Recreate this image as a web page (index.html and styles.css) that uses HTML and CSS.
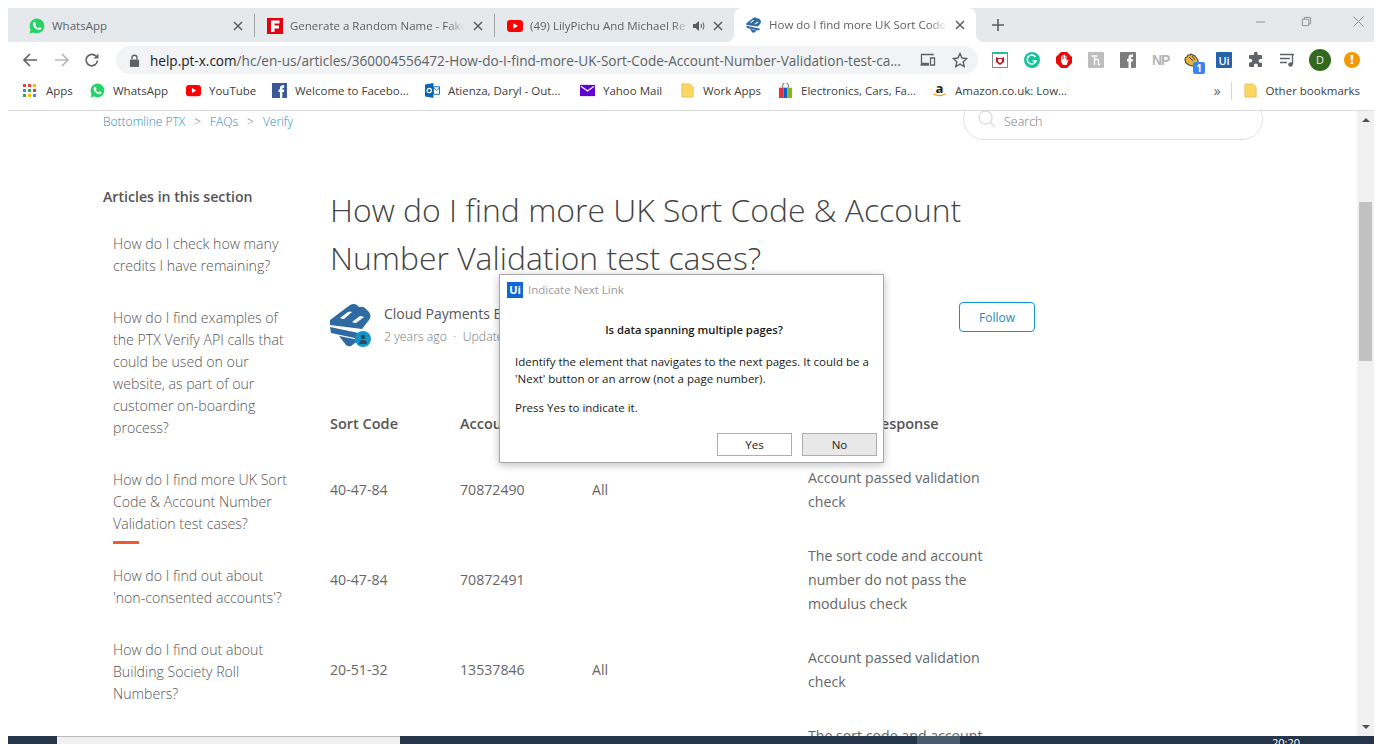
FILE: index.html
```html
<!DOCTYPE html>
<html lang="en">
<head>
    <meta charset="UTF-8">
    <title>How do I find more UK Sort Code &amp; Account Number Validation test cases?</title>
    <link rel="stylesheet" href="styles.css">
</head>
<body>
<svg class="defs" width="0" height="0">
    <symbol id="i-whatsapp" viewBox="0 0 16 16">
        <path fill="#25d366" d="M8 .5a7.4 7.4 0 0 0-6.4 11.1L.6 15.5l4-1A7.4 7.4 0 1 0 8 .5z"/>
        <path fill="#fff" d="M5.6 3.9c-.3 0-.7.1-1 .5-.4.5-.9 1.200-.6 2.500.4 1.500 2.100 3.700 4.200 4.600 1.500.6 2.400.6 3.100.2.600-.3 1-1 1-1.500 0-.3-.1-.4-.3-.5l-1.500-.7c-.2-.1-.4-.1-.5.1l-.6.800c-.1.100-.3.200-.5.100-.9-.4-2-1.400-2.500-2.300-.1-.2 0-.3.100-.5l.4-.5c.1-.2.1-.3 0-.5l-.6-1.600c-.1-.2-.3-.4-.7-.3z"/>
    </symbol>
    <symbol id="i-youtube" viewBox="0 0 16 16">
        <rect x="0" y="2" width="16" height="12" rx="3.200" fill="#f00"/>
        <path fill="#fff" d="M6.300 5.300v5.400L11 8z"/>
    </symbol>
    <symbol id="i-bottomline" viewBox="0 0 42 44">
        <path fill="#2f6aa3" d="M0 17 20 2q4-2 7 0l2 2q3-1 6 1l4 4q3 4 0 8l-7 9-32-4z"/>
        <path fill="#2f6aa3" d="M0 24l38 8-4 5L1 30z"/>
        <path fill="#2f6aa3" d="M9 33l20 4-8 6q-3 1-5-1z"/>
        <path fill="#fff" d="M10 15l8-6q2-1 4 0l-8 7q-2 0-4-1zM22 19l8-6q2 0 4 1l-8 6q-2 0-4-1z"/>
    </symbol>
    <symbol id="i-folder" viewBox="0 0 14 16">
        <path fill="#fdd663" stroke="#e3b94f" stroke-width=".8" d="M1 1h8l4 3v11H1z"/>
    </symbol>
    <symbol id="i-close" viewBox="0 0 10 10">
        <path fill="none" stroke="#5a5d60" stroke-width="1.500" d="M1 1l8 8M9 1l-8 8"/>
    </symbol>
</svg>

<div class="window">
    <div class="tabstrip">
        <div class="tab tab-first">
            <svg class="fav"><use href="#i-whatsapp"/></svg>
            <span class="tab-title">WhatsApp</span>
            <svg class="tab-x"><use href="#i-close"/></svg>
        </div>
        <div class="tab">
            <svg class="fav" viewBox="0 0 16 16"><rect width="16" height="16" fill="#e3000f"/><path fill="#fff" d="M4 2.500h8.500v3H7.500v2h4.500v3H7.500v3.500H4z"/></svg>
            <span class="tab-title">Generate a Random Name - Fake</span>
            <svg class="tab-x"><use href="#i-close"/></svg>
        </div>
        <div class="tab tab-noline">
            <svg class="fav"><use href="#i-youtube"/></svg>
            <span class="tab-title">(49) LilyPichu And Michael Re</span>
            <svg class="tab-sound" viewBox="0 0 12 12"><path fill="#5a5d60" d="M0 4h2.500L6 1v10L2.500 8H0z"/><path fill="none" stroke="#5a5d60" d="M8 4q1 2 0 4M10 2.500q2 3.500 0 7"/></svg>
            <svg class="tab-x"><use href="#i-close"/></svg>
        </div>
        <div class="tab tab-active">
            <svg class="fav"><use href="#i-bottomline"/></svg>
            <span class="tab-title">How do I find more UK Sort Code</span>
            <svg class="tab-x"><use href="#i-close"/></svg>
        </div>
        <svg class="new-tab" viewBox="0 0 12 12"><path fill="none" stroke="#5a5d60" stroke-width="1.600" d="M6 0v12M0 6h12"/></svg>
        <div class="win-btns">
            <svg viewBox="0 0 12 12"><path stroke="#8a8c8e" d="M1 6.500h10"/></svg>
            <svg viewBox="0 0 12 12"><path fill="none" stroke="#8a8c8e" d="M1.500 3.500h7v7h-7zM3.500 3.500v-2h7v7h-2"/></svg>
            <svg viewBox="0 0 12 12"><path stroke="#8a8c8e" d="M.5.500l11 11M11.500.500l-11 11"/></svg>
        </div>
    </div>

    <div class="toolbar">
        <svg class="nav-btn" viewBox="0 0 16 16"><path fill="none" stroke="#5f6368" stroke-width="1.700" d="M15 8H2M8 2 2 8l6 6"/></svg>
        <svg class="nav-btn" viewBox="0 0 16 16"><path fill="none" stroke="#b4b7ba" stroke-width="1.700" d="M1 8h13M8 2l6 6-6 6"/></svg>
        <svg class="nav-btn" viewBox="0 0 16 16"><path fill="none" stroke="#5f6368" stroke-width="1.700" d="M13.500 8.500a5.700 5.700 0 1 1-1.500-4.300"/><path fill="#5f6368" d="M14.500 1.500v5h-5z"/></svg>
        <div class="omnibox">
            <svg class="lock" viewBox="0 0 12 14"><path fill="#5f6368" d="M1 6h10v8H1z"/><path fill="none" stroke="#5f6368" stroke-width="1.500" d="M3.300 6V4a2.700 2.700 0 0 1 5.400 0v2"/></svg>
            <span class="url">help.pt-x.com<span class="url-path">/hc/en-us/articles/360004556472-How-do-I-find-more-UK-Sort-Code-Account-Number-Validation-test-ca...</span></span>
            <svg class="omni-ico omni-cast" viewBox="0 0 16 14"><path fill="none" stroke="#5f6368" stroke-width="1.300" d="M13 2.500V1.500H1.500v9H9M.5 12H9"/><path fill="none" stroke="#5f6368" stroke-width="1.300" d="M10.500 5h4v7h-4z"/></svg>
            <svg class="omni-ico" viewBox="0 0 16 16"><path fill="none" stroke="#5f6368" stroke-width="1.400" d="M8 1.500l2 4.500 4.800.5-3.600 3.200 1 4.800L8 12.100l-4.200 2.400 1-4.800L1.200 6.500 6 6z"/></svg>
        </div>
        <div class="extensions">
            <svg viewBox="0 0 16 16"><rect x=".5" y="1.500" width="15" height="14" fill="#fff" stroke="#888"/><path fill="#27c28a" d="M0 0h16v2H0z"/><path fill="#c0141b" d="M4 5l2 1h4l2-1v5l-4 3-4-3z"/><path fill="#fff" d="M6 7h4v2.500L8 11 6 9.500z"/></svg>
            <svg viewBox="0 0 16 16"><circle cx="8" cy="8" r="8" fill="#15c39a"/><path fill="none" stroke="#fff" stroke-width="1.600" d="M11.500 5A4.500 4.500 0 1 0 12 9H8.700"/></svg>
            <svg viewBox="0 0 16 16"><path fill="#e60b0b" d="M5 0h6l5 5v6l-5 5H5l-5-5V5z"/><path fill="#fff" d="M5 8V4.500h1V7h.500V3h1v4H8V2.800h1V7h.500V3.800h1V9l1.200-1.500.800.500L10.500 13H7L5 10z"/></svg>
            <svg viewBox="0 0 16 16"><rect width="16" height="16" rx="1" fill="#bdbdbd"/><path fill="none" stroke="#fff" stroke-width="1.300" d="M3.500 4h6M6.500 4v9M6.500 8q4-2 4 1v3.500l1.500.5"/></svg>
            <svg viewBox="0 0 16 16"><rect width="16" height="16" rx="1" fill="#7d7d7d"/><path fill="#fff" d="M8.500 16V9.500H7V7h1.500V5.300C8.500 3.500 9.700 2.500 11.200 2.500H13V5h-1.200c-.6 0-.8.300-.8.800V7h2l-.3 2.500H11V16z"/></svg>
            <span class="ext-np">NP</span>
            <div class="ext-hand">
                <svg viewBox="0 0 16 16"><path fill="#e8b73a" stroke="#4a4234" stroke-width="1.100" stroke-linejoin="round" d="M1 7q0-3 2-3l1-2 2 0 1-1 2 1 2 1 3 4v3l-2 2-4 1-3-1-3-2z"/><path fill="none" stroke="#4a4234" d="M5 4l4 4M8 3l3 4"/></svg>
                <span class="ext-badge">1</span>
            </div>
            <svg viewBox="0 0 16 16"><rect width="16" height="16" rx="1" fill="#2363a8"/><text x="8" y="12.500" class="ui-mark">Ui</text></svg>
            <svg viewBox="0 0 16 16"><path fill="#5f6368" d="M6 1.500a1.800 1.800 0 0 1 3.600 0V3H13a1 1 0 0 1 1 1v3h-1.500a1.900 1.900 0 0 0 0 3.800H14V14a1 1 0 0 1-1 1H9.800v-1.500a1.900 1.900 0 0 0-3.800 0V15H2a1 1 0 0 1-1-1v-3.500h1.300a1.900 1.900 0 0 0 0-3.800H1V4a1 1 0 0 1 1-1h4z"/></svg>
            <svg viewBox="0 0 16 16"><path fill="none" stroke="#5f6368" stroke-width="1.400" d="M0 2.500h14M0 6.500h10M0 10.500h7"/><path fill="none" stroke="#5f6368" stroke-width="1.400" d="M12.500 3v9"/><circle cx="10.500" cy="12.500" r="2.300" fill="#5f6368"/></svg>
            <span class="avatar">D</span>
            <span class="alert">!</span>
        </div>
    </div>

    <div class="bookmarks">
        <div class="bm">
            <svg class="bm-ico" viewBox="0 0 13 13"><g>
                <rect x="0" width="3" height="3" fill="#ea4335"/><rect x="5" width="3" height="3" fill="#ea4335"/><rect x="10" width="3" height="3" fill="#fbbc04"/>
                <rect x="0" y="5" width="3" height="3" fill="#4285f4"/><rect x="5" y="5" width="3" height="3" fill="#34a853"/><rect x="10" y="5" width="3" height="3" fill="#ea4335"/>
                <rect x="0" y="10" width="3" height="3" fill="#34a853"/><rect x="5" y="10" width="3" height="3" fill="#fbbc04"/><rect x="10" y="10" width="3" height="3" fill="#4285f4"/>
            </g></svg>
            <span>Apps</span>
        </div>
        <div class="bm"><svg class="bm-ico"><use href="#i-whatsapp"/></svg><span>WhatsApp</span></div>
        <div class="bm"><svg class="bm-ico"><use href="#i-youtube"/></svg><span>YouTube</span></div>
        <div class="bm">
            <svg class="bm-ico" viewBox="0 0 16 16"><rect width="16" height="16" fill="#3b5998"/><path fill="#fff" d="M8.500 16V9.500H7V7h1.500V5.300C8.500 3.500 9.700 2.500 11.200 2.500H13V5h-1.200c-.6 0-.8.300-.8.800V7h2l-.3 2.500H11V16z"/></svg>
            <span>Welcome to Facebo...</span>
        </div>
        <div class="bm">
            <svg class="bm-ico" viewBox="0 0 16 16"><path fill="#0a64b4" d="M0 1.500 9 0v16L0 14.500z"/><circle cx="4.500" cy="8" r="2.300" fill="none" stroke="#fff" stroke-width="1.300"/><path fill="#fff" stroke="#0a64b4" d="M9 4h6.500v8H9z"/><path fill="none" stroke="#0a64b4" d="M9.500 5l3 3 3-3"/></svg>
            <span>Atienza, Daryl - Out...</span>
        </div>
        <div class="bm">
            <svg class="bm-ico" viewBox="0 0 16 16"><rect y="2" width="16" height="12" fill="#5f01d1"/><path fill="none" stroke="#fff" stroke-width="1.300" d="M1 3.500l7 5 7-5"/></svg>
            <span>Yahoo Mail</span>
        </div>
        <div class="bm"><svg class="bm-ico"><use href="#i-folder"/></svg><span>Work Apps</span></div>
        <div class="bm">
            <svg class="bm-ico" viewBox="0 0 16 16"><path fill="none" stroke="#555" d="M5 5V2.500a3 3 0 0 1 6 0V5"/><path fill="#e53238" d="M1 5h5v11H1z"/><path fill="#0064d2" d="M6 5h4v11H6z"/><path fill="#86b817" d="M10 5h5v11h-5z"/></svg>
            <span>Electronics, Cars, Fa...</span>
        </div>
        <div class="bm">
            <svg class="bm-ico" viewBox="0 0 16 16"><text x="8" y="10.500" class="amz-mark">a</text><path fill="none" stroke="#f90" stroke-width="1.300" d="M1.500 11.500q6.500 4 13 0"/></svg>
            <span>Amazon.co.uk: Low...</span>
        </div>
        <div class="bm-end">
            <span class="bm-more">»</span>
            <i class="bm-sep"></i>
            <svg class="bm-ico"><use href="#i-folder"/></svg>
            <span>Other bookmarks</span>
        </div>
    </div>

    <div class="viewport">
        <div class="page">
            <header class="topbar">
                <div class="crumbs"><a>Bottomline PTX</a><b>&gt;</b><a>FAQs</a><b>&gt;</b><a>Verify</a></div>
                <div class="search">
                    <svg viewBox="0 0 18 18"><circle cx="7.500" cy="7.500" r="6.500" fill="none" stroke="#dcdcdc" stroke-width="1.300"/><path stroke="#dcdcdc" stroke-width="1.500" d="M12 12l5 5"/></svg>
                    <span>Search</span>
                </div>
            </header>

            <div class="columns">
                <aside class="sidebar">
                    <h3>Articles in this section</h3>
                    <ul>
                        <li>How do I check how many credits I have remaining?</li>
                        <li>How do I find examples of the PTX Verify API calls that could be used on our website, as part of our customer on-boarding process?</li>
                        <li class="current">How do I find more UK Sort Code &amp; Account Number Validation test cases?</li>
                        <li>How do I find out about 'non-consented accounts'?</li>
                        <li>How do I find out about Building Society Roll Numbers?</li>
                    </ul>
                </aside>

                <article class="article">
                    <h1>How do I find more UK Sort Code &amp; Account Number Validation test cases?</h1>
                    <div class="author">
                        <div class="author-pic">
                            <svg><use href="#i-bottomline"/></svg>
                            <span class="author-badge"><svg viewBox="0 0 10 10"><circle cx="5" cy="3" r="2.200" fill="#2b4a5e"/><path fill="#2b4a5e" d="M1 10q0-4 4-4t4 4z"/></svg></span>
                        </div>
                        <div class="author-info">
                            <div class="author-name">Cloud Payments Bottomline</div>
                            <div class="author-meta">2 years ago &nbsp;·&nbsp; Updated</div>
                        </div>
                        <button class="follow">Follow</button>
                    </div>
                    <table class="cases">
                        <thead>
                            <tr><th>Sort Code</th><th>Account Number</th><th>Applies To</th><th>Example Response</th></tr>
                        </thead>
                        <tbody>
                            <tr><td>40-47-84</td><td>70872490</td><td>All</td><td>Account passed validation check</td></tr>
                            <tr><td>40-47-84</td><td>70872491</td><td></td><td>The sort code and account number do not pass the modulus check</td></tr>
                            <tr><td>20-51-32</td><td>13537846</td><td>All</td><td>Account passed validation check</td></tr>
                            <tr><td>20-51-32</td><td>13537847</td><td></td><td>The sort code and account number do not pass the modulus check</td></tr>
                        </tbody>
                    </table>
                </article>
            </div>
        </div>

        <div class="scrollbar">
            <i class="arrow-up"></i>
            <i class="thumb"></i>
            <i class="arrow-down"></i>
        </div>

        <div class="dialog">
            <div class="dialog-title"><span class="ui-logo">Ui</span><span>Indicate Next Link</span></div>
            <div class="dialog-body">
                <p class="dialog-head">Is data spanning multiple pages?</p>
                <p>Identify the element that navigates to the next pages. It could be a 'Next' button or an arrow (not a page number).</p>
                <p>Press Yes to indicate it.</p>
            </div>
            <div class="dialog-btns">
                <button>Yes</button>
                <button class="btn-no">No</button>
            </div>
        </div>
    </div>

    <div class="taskbar">
        <i class="task-search"></i>
        <i class="task-active"></i>
        <span class="task-clock">20:20</span>
    </div>
</div>
</body>
</html>
```

FILE: styles.css
```css
*{
    box-sizing: border-box;
    margin: 0;
    padding: 0;
}
html, body{
    height: 100%;
    overflow: hidden;
    background: #fff;
}
body{
    font-family: "Open Sans", "Noto Sans", sans-serif;
    padding: 8px 8px 0;
}
.defs{
    display: block;
    height: 0;
}
.window{
    display: flex;
    flex-direction: column;
    height: 736px;
    position: relative;
}

/* tabs */
.tabstrip{
    display: flex;
    height: 34px;
    background: #e6e9ec;
    flex: none;
}
.tab{
    display: flex;
    align-items: center;
    width: 240px;
    padding: 0 11px 0 12px;
    font-size: 11.5px;
    color: #5f6265;
    border-right: 1px solid #9fa2a5;
    margin: 6px 0 5px;
}
.tab-first{
    width: 247px;
    padding: 0 11px 0 21px;
}
.tab-noline{
    width: 239px;
    border-right: 0;
}
.tab-active{
    width: 242px;
    background: #fff;
    border: 0;
    margin: 0;
    padding-bottom: 1px;
    border-radius: 8px 8px 0 0;
    position: relative;
}
.tab-active::before, .tab-active::after{
    content: "";
    position: absolute;
    bottom: 0;
    width: 8px;
    height: 8px;
    background: radial-gradient(circle at 0 0, transparent 8px, #fff 8.5px);
}
.tab-active::before{
    left: -8px;
}
.tab-active::after{
    right: -8px;
    background: radial-gradient(circle at 100% 0, transparent 8px, #fff 8.5px);
}
.fav{
    width: 16px;
    height: 16px;
    flex: none;
    margin-right: 7px;
}
.tab-title{
    flex: 1;
    white-space: nowrap;
    overflow: hidden;
    -webkit-mask-image: linear-gradient(90deg, #000 90%, transparent);
    mask-image: linear-gradient(90deg, #000 90%, transparent);
}
.tab-first .tab-title{
    -webkit-mask-image: none;
    mask-image: none;
}
.tab-x{
    width: 10px;
    height: 10px;
    flex: none;
    margin-left: 8px;
}
.tab-sound{
    width: 12px;
    height: 12px;
    flex: none;
    margin-left: 4px;
}
.new-tab{
    width: 12px;
    height: 12px;
    margin: 11px 0 0 16px;
    flex: none;
}
.win-btns{
    display: flex;
    gap: 41px;
    margin-left: auto;
    padding: 8px 10px 0 0;
}
.win-btns svg{
    width: 11px;
    height: 11px;
}
.win-btns svg:first-child{
    margin-right: -6px;
}

/* address bar */
.toolbar{
    display: flex;
    align-items: center;
    height: 36px;
    flex: none;
    padding-left: 14px;
    background: #fff;
}
.nav-btn{
    width: 16px;
    height: 16px;
    flex: none;
    margin-right: 16px;
}
.nav-btn:nth-child(3){
    margin: 0 16px 0 -2px;
}
.omnibox{
    display: flex;
    align-items: center;
    width: 862px;
    height: 28px;
    flex: none;
    background: #f1f3f4;
    border-radius: 14px;
    padding: 0 10px 0 13px;
}
.lock{
    width: 11px;
    height: 13px;
    flex: none;
    margin-right: 10px;
}
.url{
    flex: 1;
    font-size: 13.57px;
    color: #202124;
    white-space: nowrap;
    overflow: hidden;
}
.url-path{
    color: #5f6368;
}
.omni-ico{
    width: 16px;
    height: 16px;
    flex: none;
}
.omni-cast{
    margin-right: 16px;
}
.extensions{
    display: flex;
    align-items: center;
    gap: 16px;
    margin-left: 14px;
}
.extensions > svg, .ext-np, .ext-hand{
    width: 16px;
    height: 16px;
    flex: none;
}
.ext-np{
    font-family: "Liberation Sans Narrow", "Liberation Sans", sans-serif;
    font-size: 14px;
    font-weight: 700;
    line-height: 16px;
    color: #b5b5b5;
    white-space: nowrap;
    letter-spacing: -1px;
}
.ext-hand{
    position: relative;
}
.ext-hand svg{
    width: 16px;
    height: 16px;
}
.ext-badge{
    position: absolute;
    right: -5px;
    bottom: -6px;
    width: 12px;
    height: 12px;
    background: #3a84ee;
    border-radius: 2px;
    color: #fff;
    font-size: 10px;
    font-weight: 700;
    line-height: 12px;
    text-align: center;
}
.ui-mark{
    font-size: 11px;
    font-weight: 600;
    fill: #fff;
    text-anchor: middle;
}
.avatar{
    width: 22px;
    height: 22px;
    border-radius: 50%;
    background: #33691e;
    color: #e8eee2;
    font-size: 11px;
    line-height: 22px;
    text-align: center;
    margin: 0 -3px;
    flex: none;
}
.alert{
    width: 16px;
    height: 16px;
    border-radius: 50%;
    background: #f29900;
    color: #fff;
    font-size: 12px;
    font-weight: 800;
    line-height: 16px;
    text-align: center;
    flex: none;
}

/* bookmarks */
.bookmarks{
    display: grid;
    grid-template-columns: 67px 96px 86px 153px 155px 100px 98px 154px 1fr auto;
    align-items: center;
    height: 33px;
    flex: none;
    padding: 0 14px 7px 15px;
    font-size: 11.5px;
    color: #3c4043;
    background: #fff;
    border-bottom: 1px solid #d9dadb;
}
.bm, .bm-end{
    display: flex;
    align-items: center;
    white-space: nowrap;
}
.bm-end{
    grid-column: 10;
}
.bm-ico{
    width: 15px;
    height: 15px;
    flex: none;
    margin-right: 8px;
}
.bm:first-child .bm-ico{
    width: 13px;
    height: 13px;
    margin-right: 10px;
}
.amz-mark{
    font-size: 14px;
    font-weight: 700;
    fill: #222;
    text-anchor: middle;
}
.bm-more{
    font-size: 14px;
    color: #5f6368;
    margin-right: 10px;
}
.bm-sep{
    width: 1px;
    height: 18px;
    background: #d4d5d6;
    margin-right: 11px;
}

/* page */
.viewport{
    flex: 1;
    display: flex;
    position: relative;
    overflow: hidden;
    background: #fff;
    min-height: 0;
}
.page{
    flex: 1;
    min-width: 0;
    padding-left: 94px;
    overflow: hidden;
    font-weight: 300;
    color: #555;
}
.topbar{
    display: flex;
    justify-content: space-between;
    height: 29px;
    padding-right: 94px;
}
.crumbs{
    display: flex;
    align-items: center;
    gap: 9px;
    height: 21px;
    padding-left: 1px;
    font-size: 12px;
    color: #1f8cc4;
}
.crumbs b{
    font-weight: 300;
    color: #777;
}
.search{
    display: flex;
    align-items: center;
    width: 300px;
    height: 42px;
    margin-top: -13px;
    padding: 4px 0 0 14px;
    border: 1px solid #e1e1e1;
    border-radius: 21px;
    font-size: 12.5px;
    color: #777;
}
.search svg{
    width: 18px;
    height: 18px;
    margin: -4px 8px 0 0;
}
.columns{
    display: flex;
    padding-top: 46px;
}
.sidebar{
    width: 228px;
    flex: none;
}
.sidebar h3{
    font-size: 14.15px;
    font-weight: 600;
    line-height: 22px;
    padding-left: 1px;
    margin-bottom: 25px;
}
.sidebar ul{
    list-style: none;
    padding-left: 11px;
}
.sidebar li{
    width: 182px;
    font-size: 14.15px;
    line-height: 22px;
    margin-bottom: 30px;
    position: relative;
}
.current::after{
    content: "";
    position: absolute;
    left: 0;
    bottom: -9px;
    width: 26px;
    height: 3px;
    background: #f05a28;
}
.article{
    width: 705px;
    flex: none;
}
.article h1{
    font-size: 31.9px;
    font-weight: 300;
    line-height: 48px;
    color: #444;
}
.author{
    display: flex;
    align-items: center;
    margin-top: 22px;
    height: 44px;
}
.author-pic{
    width: 42px;
    height: 44px;
    margin-top: -2px;
    position: relative;
    flex: none;
}
.author-pic > svg{
    width: 42px;
    height: 44px;
}
.author-badge{
    position: absolute;
    right: 1px;
    bottom: 0;
    width: 16px;
    height: 16px;
    border-radius: 50%;
    background: #1295c9;
    padding: 3px;
}
.author-badge svg{
    display: block;
    width: 10px;
    height: 10px;
}
.author-info{
    margin-left: 12px;
}
.author-name{
    font-size: 14px;
    font-weight: 400;
    line-height: 22px;
}
.author-meta{
    font-size: 12.3px;
    line-height: 24px;
    color: #777;
}
.follow{
    width: 76px;
    height: 30px;
    margin: -2px 0 0 auto;
    align-self: flex-start;
    border: 1px solid #0f94d2;
    border-radius: 4px;
    background: #fff;
    color: #1a8ec4;
    font-family: inherit;
    font-size: 12px;
}
.cases{
    width: 705px;
    table-layout: fixed;
    border-collapse: collapse;
    margin-top: 49px;
    font-size: 14.15px;
    line-height: 24px;
}
.cases th, .cases td{
    padding: 15px 0;
    text-align: left;
    vertical-align: middle;
}
.cases th{
    font-size: 14.5px;
    font-weight: 600;
}
.cases th:nth-child(1){ width: 130px; }
.cases th:nth-child(2){ width: 132px; }
.cases th:nth-child(3){ width: 216px; }
.cases td:nth-child(4){ padding-right: 30px; }
.cases td{
    font-weight: 400;
    color: #666;
}

/* scrollbar */
.scrollbar{
    width: 17px;
    flex: none;
    background: #f1f1f1;
    display: flex;
    flex-direction: column;
    align-items: center;
    padding-top: 7px;
}
.arrow-up, .arrow-down{
    width: 0;
    height: 0;
    border: 4px solid transparent;
}
.arrow-up{
    border-bottom: 4px solid #505050;
    border-top: 0;
}
.arrow-down{
    border-top: 4px solid #505050;
    border-bottom: 0;
    margin-top: 364px;
}
.thumb{
    width: 13px;
    height: 159px;
    background: #c1c1c1;
    margin-top: 80px;
}

/* dialog */
.dialog{
    position: absolute;
    left: 491px;
    top: 163px;
    width: 385px;
    height: 189px;
    background: #fff;
    border: 1px solid #a8a8a8;
    box-shadow: 0 2px 8px rgba(0,0,0,.25);
    font-size: 11.5px;
    color: #1a1a1a;
    display: flex;
    flex-direction: column;
}
.dialog-title{
    display: flex;
    align-items: center;
    gap: 5px;
    height: 28px;
    padding: 1px 0 0 7px;
    color: #9a9a9a;
}
.ui-logo{
    width: 16px;
    height: 16px;
    background: #0f67d2;
    color: #fff;
    font-weight: 700;
    font-size: 11px;
    line-height: 16px;
    text-align: center;
}
.dialog-body{
    padding: 18px 10px 0 15px;
    line-height: 17px;
}
.dialog-body p{
    margin-bottom: 12px;
}
.dialog-body .dialog-head{
    font-size: 11.3px;
    font-weight: 600;
    text-align: center;
    margin-bottom: 15px;
}
.dialog-btns{
    display: flex;
    justify-content: flex-end;
    gap: 10px;
    margin-top: auto;
    padding: 0 6px 6px 0;
}
.dialog-btns button{
    width: 75px;
    height: 23px;
    background: #fff;
    border: 1px solid #adadad;
    font-family: inherit;
    font-size: 11.5px;
    color: #1a1a1a;
}
.dialog-btns .btn-no{
    background: #e8e8e8;
}

/* windows taskbar, only the top few pixels are on screen */
.taskbar{
    height: 8px;
    flex: none;
    background: #26354a;
    display: flex;
    position: relative;
    overflow: hidden;
    color: #fff;
    font-size: 11px;
}
.task-search{
    width: 343px;
    margin-left: 49px;
    background: #f0f0f0;
    border-top: 1px solid #bbb;
}
.task-active{
    width: 43px;
    margin-left: 517px;
    background: #4b5a6c;
}
.task-clock{
    margin-left: 312px;
    line-height: 16px;
    margin-top: -1px;
}
```
